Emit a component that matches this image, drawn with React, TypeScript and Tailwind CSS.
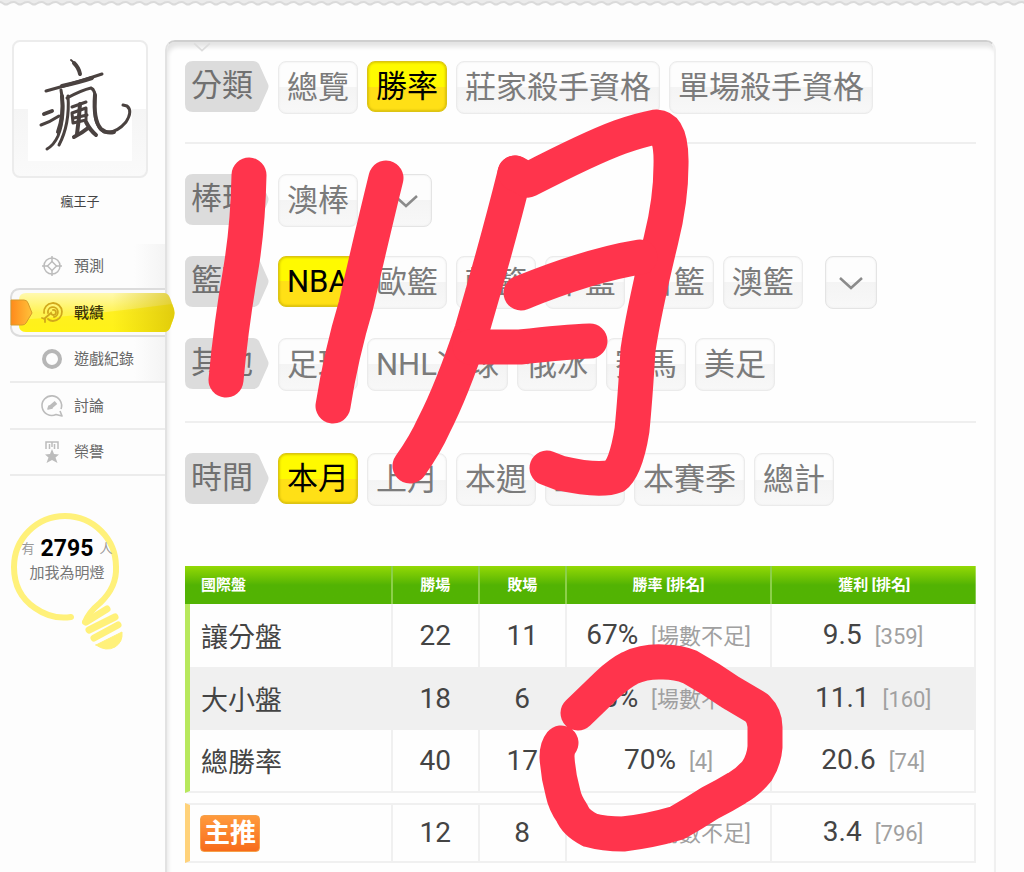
import type { ReactNode } from 'react';
import clsx from 'clsx';

type Filter = { label: string; active?: boolean };
type FilterGroup = { name: string; items: Filter[]; more?: boolean };

const category: FilterGroup[] = [
  {
    name: '分類',
    items: [{ label: '總覽' }, { label: '勝率', active: true }, { label: '莊家殺手資格' }, { label: '單場殺手資格' }],
  },
];

const leagues: FilterGroup[] = [
  { name: '棒球', items: [{ label: '澳棒' }], more: true },
  {
    name: '籃球',
    items: [
      { label: 'NBA', active: true },
      { label: '歐籃' },
      { label: '韓籃' },
      { label: '中籃' },
      { label: '日籃' },
      { label: '澳籃' },
    ],
    more: true,
  },
  {
    name: '其他',
    items: [{ label: '足球' }, { label: 'NHL冰球' }, { label: '俄冰' }, { label: '賽馬' }, { label: '美足' }],
  },
];

const period: FilterGroup[] = [
  {
    name: '時間',
    items: [
      { label: '本月', active: true },
      { label: '上月' },
      { label: '本週' },
      { label: '上週' },
      { label: '本賽季' },
      { label: '總計' },
    ],
  },
];

type Row = { name: string; win: number; lose: number; rate: string; rateRank: string; profit: string; profitRank: string };

const rows: Row[] = [
  { name: '讓分盤', win: 22, lose: 11, rate: '67%', rateRank: '場數不足', profit: '9.5', profitRank: '359' },
  { name: '大小盤', win: 18, lose: 6, rate: '75%', rateRank: '場數不足', profit: '11.1', profitRank: '160' },
  { name: '總勝率', win: 40, lose: 17, rate: '70%', rateRank: '4', profit: '20.6', profitRank: '74' },
];

const mainPick: Row = {
  name: '主推', win: 12, lose: 8, rate: '60%', rateRank: '場數不足', profit: '3.4', profitRank: '796',
};

function ScallopEdge() {
  return (
    <svg className="block h-2 w-full" aria-hidden="true">
      <defs>
        <pattern id="scallop" width="14" height="8" patternUnits="userSpaceOnUse">
          <path d="M0 0H14V2Q10.500 2 8 4Q6 5 4 4Q1.500 2 0 2Z" fill="#ebebeb" />
          <path d="M0 2Q1.500 2 4 4Q6 5 8 4Q10.500 2 14 2" fill="none" stroke="#dadada" strokeWidth="2" />
        </pattern>
      </defs>
      <rect width="100%" height="8" fill="url(#scallop)" />
    </svg>
  );
}

/* Brush-drawn signature used as the avatar */
function Signature() {
  return (
    <svg viewBox="-5 4 110 110" className="h-[110px] w-[110px] shrink-0" fill="none" stroke="#4a4240" strokeLinecap="round" strokeLinejoin="round" aria-hidden="true">
      <path d="M41 10Q48 15 50 25" strokeWidth="2" />
      <path d="M44 13Q49 18 50 24" strokeWidth="4" />
      <path d="M16 41Q42 34 72 24" strokeWidth="3" />
      <path d="M32 36Q50 32 62 28" strokeWidth="4" />
      <path d="M31 40Q36 66 28 86Q24 95 17 99" strokeWidth="3" />
      <path d="M32 46Q34 66 28 82" strokeWidth="4" />
      <path d="M38 46Q40 74 29 95" strokeWidth="3" />
      <path d="M14 64L22 61" strokeWidth="4" />
      <path d="M11 75Q20 72 29 66" strokeWidth="3" />
      <path d="M37 48Q52 40 61 38Q66 40 65 52Q63 75 74 82Q86 84 96 72Q103 61 97 56L93 55" strokeWidth="3" />
      <path d="M65 45Q63 70 71 79Q77 84 84 82" strokeWidth="4" />
      <path d="M42 57L56 52" strokeWidth="3" />
      <path d="M42 63L56 58L56 70L43 73Z" strokeWidth="3" />
      <path d="M50 54Q49 70 47 84" strokeWidth="4" />
      <path d="M44 87Q52 83 58 78M56 72Q60 80 66 85" strokeWidth="4" />
      <path d="M44 68L57 65" strokeWidth="3" />
    </svg>
  );
}

function CrosshairIcon() {
  return (
    <svg viewBox="0 0 24 24" className="size-6" fill="none" stroke="#bcbcbc" strokeWidth="1.500" aria-hidden="true">
      <circle cx="12" cy="12" r="8" />
      <path d="M12 7.500L16.500 12L12 16.500L7.500 12Z" />
      <path d="M12 2V8M12 16V22M2 12H8M16 12H22" />
    </svg>
  );
}

function RecordIcon() {
  return (
    <svg viewBox="0 0 24 24" className="size-6" fill="none" stroke="#d1a81c" strokeWidth="1.800" strokeLinecap="round" aria-hidden="true">
      <path d="M4 12A9 9 0 1 1 13 20Q10 20 8 18" />
      <path d="M8 12A5 5 0 1 1 14 16" />
      <path d="M13 9A2.500 2.500 0 1 1 11 12L4 18M2 17L5 18L5 21" />
    </svg>
  );
}

function RingIcon() {
  return (
    <svg viewBox="0 0 24 24" className="size-6" fill="none" aria-hidden="true">
      <circle cx="12" cy="12" r="8" stroke="#b6b6b6" strokeWidth="4" />
    </svg>
  );
}

function TalkIcon() {
  return (
    <svg viewBox="0 0 24 24" className="size-6" fill="none" stroke="#bcbcbc" strokeWidth="1.600" strokeLinejoin="round" aria-hidden="true">
      <path d="M21 15A9.800 9.800 0 1 0 16 20.500L22 22L20 17" />
      <path d="M8 15L9 12L12 14Z" fill="#bcbcbc" />
      <path d="M10 13.500L16 8.500" strokeWidth="4" />
    </svg>
  );
}

function HonorIcon() {
  return (
    <svg viewBox="0 0 24 24" className="size-6" fill="none" stroke="#bcbcbc" aria-hidden="true">
      <path d="M6 9V2H18V9M9.500 9V4M14.500 9V4M12 2V7" strokeWidth="1.500" />
      <path d="M12 9L14 14L19 14.500L15.500 17.500L17.500 23L12 20L6.500 23L8.500 17.500L5 14.500L10 14Z" fill="#bcbcbc" stroke="none" />
    </svg>
  );
}

function NavItem({ icon, label, className }: { icon: ReactNode; label: string; className?: string }) {
  return (
    <a href="#" className={clsx('flex items-center gap-2.5 pl-[30px] text-[15px] leading-5 text-[#666]', className)}>
      {icon}
      {label}
    </a>
  );
}

/* The selected tab sticks out over the left border of the panel */
function ActiveNavItem() {
  return (
    <a href="#" aria-current="page" className="relative z-10 -mr-[10px] flex h-[49px] items-center gap-2.5 pl-[30px] text-[15px] leading-5 font-medium text-[#3c3608]">
      <svg viewBox="0 0 165 49" preserveAspectRatio="none" className="absolute inset-0 h-full w-full" aria-hidden="true">
        <defs>
          <linearGradient id="tabFill" x1="0" y1="0" x2="0" y2="1">
            <stop offset="0" stopColor="#fff9b0" />
            <stop offset="0.5" stopColor="#fff352" />
            <stop offset="1" stopColor="#fff83a" />
          </linearGradient>
          <linearGradient id="tabShade" x1="0" y1="0" x2="1" y2="0">
            <stop offset="0.6" stopColor="#d0b800" stopOpacity="0" />
            <stop offset="1" stopColor="#cdb400" stopOpacity="0.6" />
          </linearGradient>
          <linearGradient id="tabArrow" x1="0" y1="0" x2="1" y2="0">
            <stop offset="0" stopColor="#ff8a1c" />
            <stop offset="1" stopColor="#ffc23a" />
          </linearGradient>
        </defs>
        <path d="M155 1H10Q2 1 1 9V40Q2 47 10 48H155" fill="#fafafa" stroke="#dcdcdc" strokeWidth="2" />
        <path d="M16 5H154Q158 5 160 10L164 21Q165 25 164 29L160 40Q158 44 154 44H16Q9 44 9 37V12Q9 5 16 5Z" fill="url(#tabFill)" />
        <path d="M9 32Q80 27 162 16L164 21Q165 25 164 29L160 40Q158 44 154 44H16Q9 44 9 37Z" fill="#ffee00" opacity="0.6" />
        <path d="M16 5H154Q158 5 160 10L164 21Q165 25 164 29L160 40Q158 44 154 44H16Q9 44 9 37V12Q9 5 16 5Z" fill="url(#tabShade)" />
        <path d="M1 12H14Q17 12 18 15L22 25L16 35Q15 37 12 37H1Z" fill="url(#tabArrow)" stroke="#d79a2a" strokeWidth="1" />
      </svg>
      <span className="relative"><RecordIcon /></span>
      <span className="relative">戰績</span>
    </a>
  );
}

function Sidebar() {
  return (
    <aside className="w-[165px] shrink-0">
      <div className="ml-3 flex h-[138px] w-[136px] items-center justify-center rounded-lg border-2 border-[#ececec] bg-linear-to-b from-white from-50% via-[#f5f5f5] via-50% to-[#fafafa]">
        <div className="flex h-[104px] w-[104px] items-center justify-center bg-white">
          <Signature />
        </div>
      </div>
      <p className="mt-3 ml-3 w-[136px] text-center text-[13px] leading-6 text-[#444]">瘋王子</p>

      <nav className="mt-[30px] ml-2.5 flex flex-col">
        <NavItem icon={<CrosshairIcon />} label="預測" className="h-[44px] bg-linear-to-l from-[#f4f4f4] to-transparent to-20%" />
        <ActiveNavItem />
        <NavItem icon={<RingIcon />} label="遊戲紀錄" className="h-[46px] border-b-2 border-[#ececec] bg-linear-to-l from-[#f4f4f4] to-transparent to-20%" />
        <NavItem icon={<TalkIcon />} label="討論" className="h-[47px] border-b-2 border-[#ececec]" />
        <NavItem icon={<HonorIcon />} label="榮譽" className="h-[46px] border-b-2 border-[#ececec]" />
      </nav>

      <div className="relative mt-9 ml-2.5 h-[142px] w-[118px]">
        <svg viewBox="0 0 118 142" className="absolute inset-0 h-full w-full" fill="none" stroke="#fff17a" strokeLinecap="round" aria-hidden="true">
          <path d="M61 105Q42 108 25 96Q4 82 4 55A51 51 0 0 1 106 55Q107 75 90 91Q79 100 75 110" strokeWidth="6" />
          <path d="M76 110L97 97M79 118L105 105M84 126L108 113" strokeWidth="7" />
          <path d="M86 133L112 120Q113 130 105 135Q96 140 86 133Z" fill="#fff17a" strokeWidth="1" />
        </svg>
        <div className="relative -mr-2 pt-[25px] text-center text-[15px] leading-6 text-[#777]">
          <p className="flex items-center justify-center gap-1.5 pr-3">
            <span className="text-[13px] text-[#999]">有</span>
            <strong className="text-[23px] font-bold text-black">2795</strong>
            <span className="text-[13px] text-[#999]">人</span>
          </p>
          <p className="pr-3">加我為明燈</p>
        </div>
      </div>
    </aside>
  );
}

function Chevron({ className }: { className?: string }) {
  return (
    <svg viewBox="0 0 26 14" className={className} fill="none" stroke="currentColor" strokeWidth="2.500" aria-hidden="true">
      <path d="M2 2L13 12L24 2" />
    </svg>
  );
}

function FilterRow({ group }: { group: FilterGroup }) {
  return (
    <div className="flex items-start">
      <div className="relative h-[51px] w-[84px] shrink-0">
        <svg viewBox="0 0 84 51" className="absolute inset-0 h-full w-full" aria-hidden="true">
          <path d="M8 0H68Q72 0 74 3L83 23Q84 25 83 28L74 48Q72 51 68 51H8Q0 51 0 43V8Q0 0 8 0Z" fill="#dcdcdc" />
        </svg>
        <h2 className="relative pl-1.5 text-[31px] leading-[50px] text-[#707070]">{group.name}</h2>
      </div>
      <div className="ml-[9px] flex gap-[9px]">
        {group.items.map((item) => (
          <button
            key={item.label}
            type="button"
            aria-pressed={!!item.active}
            className={clsx(
              'rounded-lg border px-2 text-[31px] leading-[50px] whitespace-nowrap',
              item.active
                ? 'h-[51px] border-[#dcc414] bg-linear-to-b from-[#fffa00] from-50% to-[#ffe016] to-50% text-black shadow-[inset_0_0_3px_#b8a000]'
                : 'h-[53px] border-[#ebebeb] bg-linear-to-b from-[#fdfdfd] from-50% via-[#f4f4f4] via-50% to-[#f8f8f8] text-[#7b7b7b] shadow-[inset_0_0_2px_#e8e8e8]',
            )}
          >
            {item.label}
          </button>
        ))}
      </div>
      {group.more && (
        <button
          type="button"
          aria-label={`更多${group.name}`}
          className="ml-[22px] flex h-[53px] w-[52px] items-center justify-center rounded-lg border border-[#e4e4e4] bg-linear-to-b from-[#fdfdfd] from-50% via-[#f4f4f4] via-50% to-[#f8f8f8] text-[#8a8a8a] shadow-[inset_0_0_2px_#e8e8e8]"
        >
          <Chevron className="h-[14px] w-[26px]" />
        </button>
      )}
    </div>
  );
}

function Filters({ groups }: { groups: FilterGroup[] }) {
  return (
    <div className="flex flex-col gap-[29px]">
      {groups.map((group) => (
        <FilterRow key={group.name} group={group} />
      ))}
    </div>
  );
}

function StatCells({ row, className }: { row: Row; className?: string }) {
  const cell = clsx('border-l-2 border-[#f0f0f0] text-center', className);
  return (
    <>
      <td className={cell}>{row.win}</td>
      <td className={cell}>{row.lose}</td>
      <td className={cell}>
        {row.rate} <span className="ml-1.5 text-[22px] text-[#a0a0a0]">[{row.rateRank}]</span>
      </td>
      <td className={clsx(cell, 'border-r-2')}>
        {row.profit} <span className="ml-1.5 text-[22px] text-[#a0a0a0]">[{row.profitRank}]</span>
      </td>
    </>
  );
}

function StatsTable() {
  return (
    <table className="w-full table-fixed border-separate border-spacing-0 text-[28px] leading-9 text-[#444]">
      <colgroup>
        <col className="w-[26%]" />
        <col className="w-[11%]" />
        <col className="w-[11%]" />
        <col className="w-[26%]" />
        <col className="w-[26%]" />
      </colgroup>
      <thead>
        <tr className="h-[38px] bg-linear-to-b from-[#93d905] to-[#52b303] to-50% text-[15px] leading-5 text-white">
          <th scope="col" className="pl-4 text-left font-bold">國際盤</th>
          <th scope="col" className="border-l-2 border-[#8ccf4a] font-bold">勝場</th>
          <th scope="col" className="border-l-2 border-[#8ccf4a] font-bold">敗場</th>
          <th scope="col" className="border-l-2 border-[#8ccf4a] font-bold">勝率 [排名]</th>
          <th scope="col" className="border-l-2 border-[#8ccf4a] font-bold">獲利 [排名]</th>
        </tr>
      </thead>
      <tbody>
        {rows.map((row, i) => {
          const edge = clsx(i === rows.length - 1 && 'border-b-2 border-b-[#f0f0f0]', i % 2 === 1 && 'border-[#e8e8e8]');
          return (
            <tr key={row.name} className="h-[63px] even:bg-[#f0f0f0]">
              <th scope="row" className={clsx('border-l-[5px] pt-1 pl-[11px] text-left text-[27px] font-normal', edge, 'border-l-[#b7e85c]')}>
                {row.name}
              </th>
              <StatCells row={row} className={edge} />
            </tr>
          );
        })}
      </tbody>
      <tbody>
        <tr className="h-[10px]">
          <td colSpan={5} className="p-0" />
        </tr>
      </tbody>
      <tbody>
        <tr className="h-[60px]">
          <th scope="row" className="border-y-2 border-l-[5px] border-y-[#f0f0f0] border-l-[#ffd27a] pl-[10px] text-left leading-[35px]">
            <span className="inline-block rounded border border-[#f5a04a] bg-linear-to-b from-[#ff9a3c] to-[#f76b1a] px-[3px] align-middle text-[26px] leading-[35px] font-bold text-white">
              {mainPick.name}
            </span>
          </th>
          <StatCells row={mainPick} className="border-y-2" />
        </tr>
      </tbody>
    </table>
  );
}

/* Freehand marker drawn on top of the page */
function MarkerNotes() {
  return (
    <svg
      viewBox="0 0 1024 872"
      className="pointer-events-none absolute top-0 left-0 z-20 h-[872px] w-[1024px]"
      fill="none"
      stroke="#ff344c"
      strokeWidth="35"
      strokeLinecap="round"
      strokeLinejoin="round"
      aria-hidden="true"
    >
      <path d="M249 175Q248 225 241 268Q231 325 226 380" />
      <path d="M386 178Q372 235 356 305Q341 355 333 406" />
      <path d="M515 173Q497 245 472 330Q452 390 434 425Q425 445 410 466" />
      <path d="M515 173L528 180Q590 148 620 137Q640 130 656 127Q672 128 671 165Q671 200 661 240Q644 310 638 350Q635 400 632 430Q626 468 615 476Q600 482 560 473L547 468" />
      <path d="M521 293Q590 265 640 257" />
      <path d="M470 347L520 347Q565 342 590 341" />
      <path d="M578 713L607 685Q620 673 630 668Q645 661 663 662Q678 662 690 667Q710 678 730 692L757 708Q765 716 765 727V747Q764 760 757 771Q748 782 737 788Q724 796 710 803Q693 814 677 823Q650 831 623 834Q604 834 590 830Q576 823 572 813Q565 803 563 793Q558 775 557 757Q557 748 561 743" />
    </svg>
  );
}

export default function App() {
  return (
    <div className="relative flex min-h-screen flex-col overflow-x-hidden bg-[#fdfdfd] font-[Roboto,'Noto_Sans_CJK_TC',sans-serif]">
      <ScallopEdge />
      <div className="flex flex-1 pt-8 pr-7">
        <Sidebar />
        <main className="min-w-0 flex-1 rounded-t-[10px] border-x-2 border-t-2 border-l-[#e2e2e2] border-r-[#f0f0f0] border-t-[#cfcfcf] bg-[#fefefe] pr-[18px] pl-[18px] shadow-[inset_2px_6px_4px_-1px_#e4e4e4]">
          <Chevron className="ml-[7px] h-[10px] w-[20px] text-[#dcdcdc]" />
          <div className="pt-[9px] pb-7">
            <Filters groups={category} />
          </div>
          <hr className="border-t-2 border-[#efefef]" />
          <div className="py-[30px]">
            <Filters groups={leagues} />
          </div>
          <hr className="border-t-2 border-[#efefef]" />
          <div className="pt-[30px] pb-[60px]">
            <Filters groups={period} />
          </div>
          <StatsTable />
        </main>
      </div>
      <MarkerNotes />
    </div>
  );
}
